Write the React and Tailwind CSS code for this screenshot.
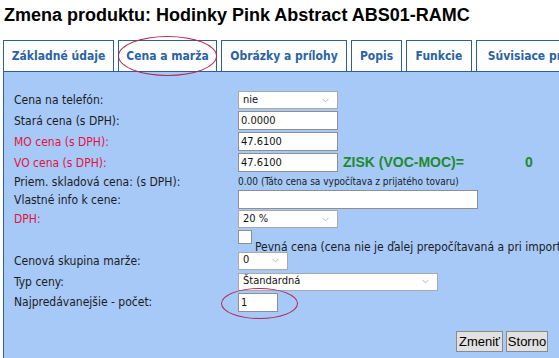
import { ChevronDown } from "lucide-react";

const tabs = [
  { label: "Základné údaje", w: "w-[111px]" },
  { label: "Cena a marža", w: "w-[99px]" },
  { label: "Obrázky a prílohy", w: "w-[126px]" },
  { label: "Popis", w: "w-[51px]" },
  { label: "Funkcie", w: "w-[66px]" },
  { label: "Súvisiace produkty", w: "w-[140px]" },
];

const Select = ({ value, w }) => (
  <div
    className={`flex items-center justify-between h-[18px] ${w} bg-white border border-[#a9a9a9] pl-[4px] pr-[6px] text-[11px] text-[#111]`}
  >
    <span>{value}</span>
    <ChevronDown className="w-[11px] h-[11px] text-[#999]" strokeWidth={1.6} />
  </div>
);

const Input = ({ value = "", w = "w-[100px]" }) => (
  <input
    readOnly
    value={value}
    className={`h-[19px] ${w} bg-white border border-[#8f8f8f] px-[2px] text-[11px] text-[#111] outline-none`}
  />
);

const Row = ({ label, red, h, children }) => (
  <div className={`flex items-center ${h}`}>
    <div className={`w-[224px] shrink-0 ${red ? "text-[#e3123d]" : "text-[#1c1c1c]"}`}>
      {label}
    </div>
    {children}
  </div>
);

export default function App() {
  return (
    <div className="relative w-[559px] h-[358px] overflow-hidden bg-white">
      <h1 className="pl-[4px] pt-[4px] h-[40px] font-['Liberation_Sans',Arial,sans-serif] font-bold text-[18px] leading-[22px] text-black whitespace-nowrap">
        Zmena produktu: Hodinky Pink Abstract ABS01-RAMC
      </h1>

      <div className="flex gap-[4px] pl-[3px] h-[31px] font-['DejaVu_Sans_Condensed','DejaVu_Sans',sans-serif] font-bold text-[12px] text-[#2b62a3] whitespace-nowrap">
        {tabs.map((t) => (
          <div
            key={t.label}
            className={`${t.w} shrink-0 h-full flex items-center justify-center bg-white border border-b-0 border-[#2e5f95]`}
          >
            {t.label}
          </div>
        ))}
      </div>

      <div className="ml-[3px] h-[287px] bg-[#a6c9f8] border-t border-l border-[#2e5f95] pl-[10px] pt-[18px] font-['DejaVu_Sans_Condensed','DejaVu_Sans',sans-serif] text-[12px] whitespace-nowrap">
        <Row label="Cena na telefón:" h="h-[20px]">
          <Select value="nie" w="w-[100px]" />
        </Row>
        <Row label="Stará cena (s DPH):" h="h-[21px]">
          <Input value="0.0000" />
        </Row>
        <Row label="MO cena (s DPH):" red h="h-[21px]">
          <Input value="47.6100" />
        </Row>
        <Row label="VO cena (s DPH):" red h="h-[21px]">
          <Input value="47.6100" />
          <span className="ml-[5px] w-[182px] font-['Liberation_Sans',Arial,sans-serif] font-bold text-[14px] text-[#1f8a2c]">
            ZISK (VOC-MOC)=
          </span>
          <span className="font-['Liberation_Sans',Arial,sans-serif] font-bold text-[14px] text-[#1f8a2c]">
            0
          </span>
        </Row>
        <Row label="Priem. skladová cena: (s DPH):" h="h-[17px]">
          <span className="text-[10px] text-[#1c1c1c]">
            0.00 (Táto cena sa vypočítava z prijatého tovaru)
          </span>
        </Row>
        <Row label="Vlastné info k cene:" h="h-[19px]">
          <Input w="w-[240px]" />
        </Row>
        <Row label="DPH:" red h="h-[20px]">
          <Select value="20 %" w="w-[100px]" />
        </Row>
        <Row label="" h="h-[21px]">
          <div className="relative h-full">
            <div className="absolute top-[1px] left-0 w-[14px] h-[14px] bg-white border border-[#8f8f8f]" />
            <span className="absolute top-[9px] left-[17px] text-[12px] text-[#1c1c1c]">
              Pevná cena (cena nie je ďalej prepočítavaná a pri importe sa nemení)
            </span>
          </div>
        </Row>
        <Row label="Cenová skupina marže:" h="h-[21px]">
          <Select value="0" w="w-[50px]" />
        </Row>
        <Row label="Typ ceny:" h="h-[21px]">
          <Select value="Štandardná" w="w-[200px]" />
        </Row>
        <Row label="Najpredávanejšie - počet:" h="h-[20px]">
          <Input value="1" w="w-[40px]" />
        </Row>

        <div className="flex justify-end gap-[3px] pr-[11px] mt-[19px] font-['Liberation_Sans',Arial,sans-serif] text-[13px] text-black">
          <button className="h-[21px] w-[47px] bg-[#e1e1e1] border border-[#8a8a8a] leading-none">
            Zmeniť
          </button>
          <button className="h-[21px] w-[42px] bg-[#e1e1e1] border border-[#8a8a8a] leading-none">
            Storno
          </button>
        </div>
      </div>

      {/* red hand-drawn marks */}
      <div className="absolute left-[118px] top-[36px] w-[99px] h-[40px] rounded-[50%] border border-[#b5284f]" />
      <div className="absolute left-[221px] top-[288px] w-[77px] h-[31px] rounded-[50%] border border-[#b5284f]" />
    </div>
  );
}
